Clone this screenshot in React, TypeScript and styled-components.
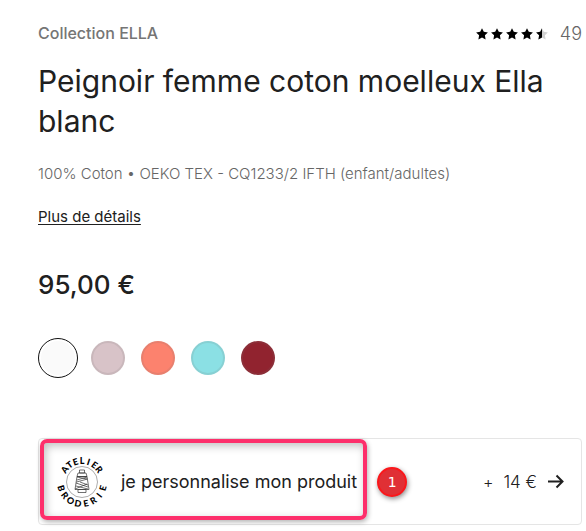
import React from "react";
import styled, { createGlobalStyle } from "styled-components";

const GlobalStyle = createGlobalStyle`
  *, *::before, *::after { box-sizing: border-box; }
  body {
    margin: 0;
    background: #fff;
    color: #202020;
    font-family: Inter, "Liberation Sans", sans-serif;
  }
`;

const Product = styled.main`
  padding: 22px 4px 6px 38px;
`;

const Header = styled.header`
  display: flex;
  align-items: center;
  justify-content: space-between;
  height: 23px;
`;

const Collection = styled.span`
  font-size: 16px;
  line-height: 23px;
  font-weight: 500;
  color: #757575;
`;

const Rating = styled.div`
  display: flex;
  align-items: center;
  gap: 12px;
`;

const Stars = styled.span`
  display: flex;
  gap: 3px;
`;

const StarIcon = styled.svg`
  display: block;
  width: 12px;
  height: 12px;
`;

const ReviewCount = styled.span`
  font-size: 18px;
  line-height: 23px;
  font-weight: 300;
  color: #666;
`;

const Title = styled.h1`
  margin: 16px 0 0;
  font-size: 30px;
  line-height: 40px;
  font-weight: 400;
`;

const Composition = styled.p`
  margin: 23px 0 0;
  font-size: 15px;
  line-height: 20px;
  font-weight: 300;
  color: #666;
`;

const DetailsLink = styled.a`
  display: table;
  margin-top: 23px;
  font-size: 15px;
  line-height: 20px;
  color: #202020;
  text-underline-offset: 2px;
`;

const Price = styled.p`
  margin: 42px 0 0;
  font-size: 26px;
  line-height: 32px;
  font-weight: 500;
`;

const Swatches = styled.fieldset`
  display: flex;
  align-items: center;
  gap: 10px;
  height: 40px;
  margin: 37px 0 0;
  padding: 0;
  border: 0;
`;

const Swatch = styled.input<{ $color: string }>`
  appearance: none;
  width: 40px;
  height: 40px;
  margin: 0;
  padding: 2px;
  border: 1px solid transparent;
  border-radius: 50%;
  cursor: pointer;

  &::before {
    content: "";
    display: block;
    height: 100%;
    border: 2px solid rgba(110, 110, 110, 0.14);
    border-radius: 50%;
    background: ${({ $color }) => $color};
  }

  &:checked {
    border-color: #111;
  }

  &:checked::before {
    border-color: transparent;
  }
`;

const PersonaliseButton = styled.button`
  display: flex;
  align-items: center;
  width: 100%;
  height: 87px;
  margin: 60px 0 0;
  padding: 0 17px 0 1px;
  border: 1px solid #e5e5e5;
  border-radius: 4px;
  background: #fff;
  color: #202020;
  font: inherit;
  font-size: 18px;
  line-height: 24px;
  text-align: left;
  cursor: pointer;
`;

const Highlight = styled.span`
  display: flex;
  align-items: center;
  align-self: flex-start;
  gap: 13px;
  height: 81px;
  padding: 4px 6px 0 12px;
  border: 4px solid #fd2f6b;
  border-radius: 7px;
  box-shadow: 1px 2px 5px rgba(0, 0, 0, 0.3), inset 2px 3px 8px rgba(0, 0, 0, 0.25);
  white-space: nowrap;
`;

const Step = styled.span`
  display: grid;
  place-items: center;
  width: 30px;
  height: 30px;
  margin-left: 10px;
  border: 2px solid #fb171b;
  border-radius: 50%;
  background: #e03035;
  box-shadow: 1px 2px 5px rgba(0, 0, 0, 0.45);
  color: #fff;
  font-family: "DejaVu Sans", sans-serif;
  font-size: 14px;
`;

const Extra = styled.span`
  display: flex;
  align-items: center;
  gap: 10px;
  margin-left: auto;
  font-size: 17px;
  font-weight: 300;
  white-space: nowrap;
`;

const Plus = styled.span`
  font-size: 16px;
`;

const Logo = styled.svg`
  flex: none;
  width: 52px;
  height: 52px;
`;

const Arrow = styled.svg`
  width: 17px;
  height: 17px;
`;

const starPath =
  "M6 .2 7.8 3.800l4.100.6-3 2.900.7 4.100L6 9.500l-3.600 1.900.7-4.100-3-2.900 4.100-.6Z";
const halfStarPath = "M6 .2V9.500l-3.600 1.900.7-4.100-3-2.900 4.100-.6Z";

function Star({ half = false }: { half?: boolean }) {
  return (
    <StarIcon viewBox="0 0 12 12" aria-hidden="true">
      <path d={starPath} fill={half ? "#d2d2d2" : "#000"} />
      {half && <path d={halfStarPath} fill="#000" />}
    </StarIcon>
  );
}

function WorkshopLogo() {
  return (
    <Logo viewBox="0 0 52 52" role="img" aria-label="Atelier Broderie">
      <g fill="#000" fontSize="9" fontWeight="900" fontFamily="Lato, sans-serif" textAnchor="middle">
        {[..."ATELIER"].map((letter, i) => (
          <text key={i} x="26" y="8" transform={`rotate(${(i - 3) * 18} 26 26)`}>
            {letter}
          </text>
        ))}
        {[..."BRODERIE"].map((letter, i) => (
          <text key={i} x="26" y="51" transform={`rotate(${(3.5 - i) * 21} 26 26)`}>
            {letter}
          </text>
        ))}
      </g>
      <g fill="none" stroke="#333" strokeWidth=".7">
        <circle cx="26" cy="26" r="15.5" stroke="#888" />
        <path d="M23.500 14h5v3h-5zM22 17h8l1 3.500h-10zM21 20.500h10l2 13H19zM22 33.500h8v3h-8zM21 24l10-3M20.500 26l11-3M20 30l12 3M20 27l12 4M24 26l8 3M19 33l12-5M21 21l10 2" />
      </g>
    </Logo>
  );
}

const colors = [
  { name: "Blanc", value: "#fafafa" },
  { name: "Rose poudré", value: "#d8c3c8" },
  { name: "Corail", value: "#fc826e" },
  { name: "Turquoise", value: "#8be0e4" },
  { name: "Bordeaux", value: "#91232f" },
];

export default function App() {
  return (
    <>
      <GlobalStyle />
      <Product>
        <Header>
          <Collection>Collection ELLA</Collection>
          <Rating>
            <Stars role="img" aria-label="4,5 sur 5">
              <Star />
              <Star />
              <Star />
              <Star />
              <Star half />
            </Stars>
            <ReviewCount>49</ReviewCount>
          </Rating>
        </Header>
        <Title>Peignoir femme coton moelleux Ella blanc</Title>
        <Composition>100% Coton • OEKO TEX - CQ1233/2 IFTH (enfant/adultes)</Composition>
        <DetailsLink href="#details">Plus de détails</DetailsLink>
        <Price>95,00 €</Price>
        <Swatches aria-label="Couleur">
          {colors.map((color, index) => (
            <Swatch
              key={color.name}
              type="radio"
              name="color"
              aria-label={color.name}
              defaultChecked={index === 0}
              $color={color.value}
            />
          ))}
        </Swatches>
        <PersonaliseButton type="button">
          <Highlight>
            <WorkshopLogo />
            je personnalise mon produit
          </Highlight>
          <Step>1</Step>
          <Extra>
            <Plus>+</Plus>
            <span>14 €</span>
            <Arrow viewBox="0 0 17 17" fill="none" stroke="#202020" strokeWidth="2" aria-hidden="true">
              <path d="M1 8.500h14.500M9.500 2.500l6 6-6 6" />
            </Arrow>
          </Extra>
        </PersonaliseButton>
      </Product>
    </>
  );
}
